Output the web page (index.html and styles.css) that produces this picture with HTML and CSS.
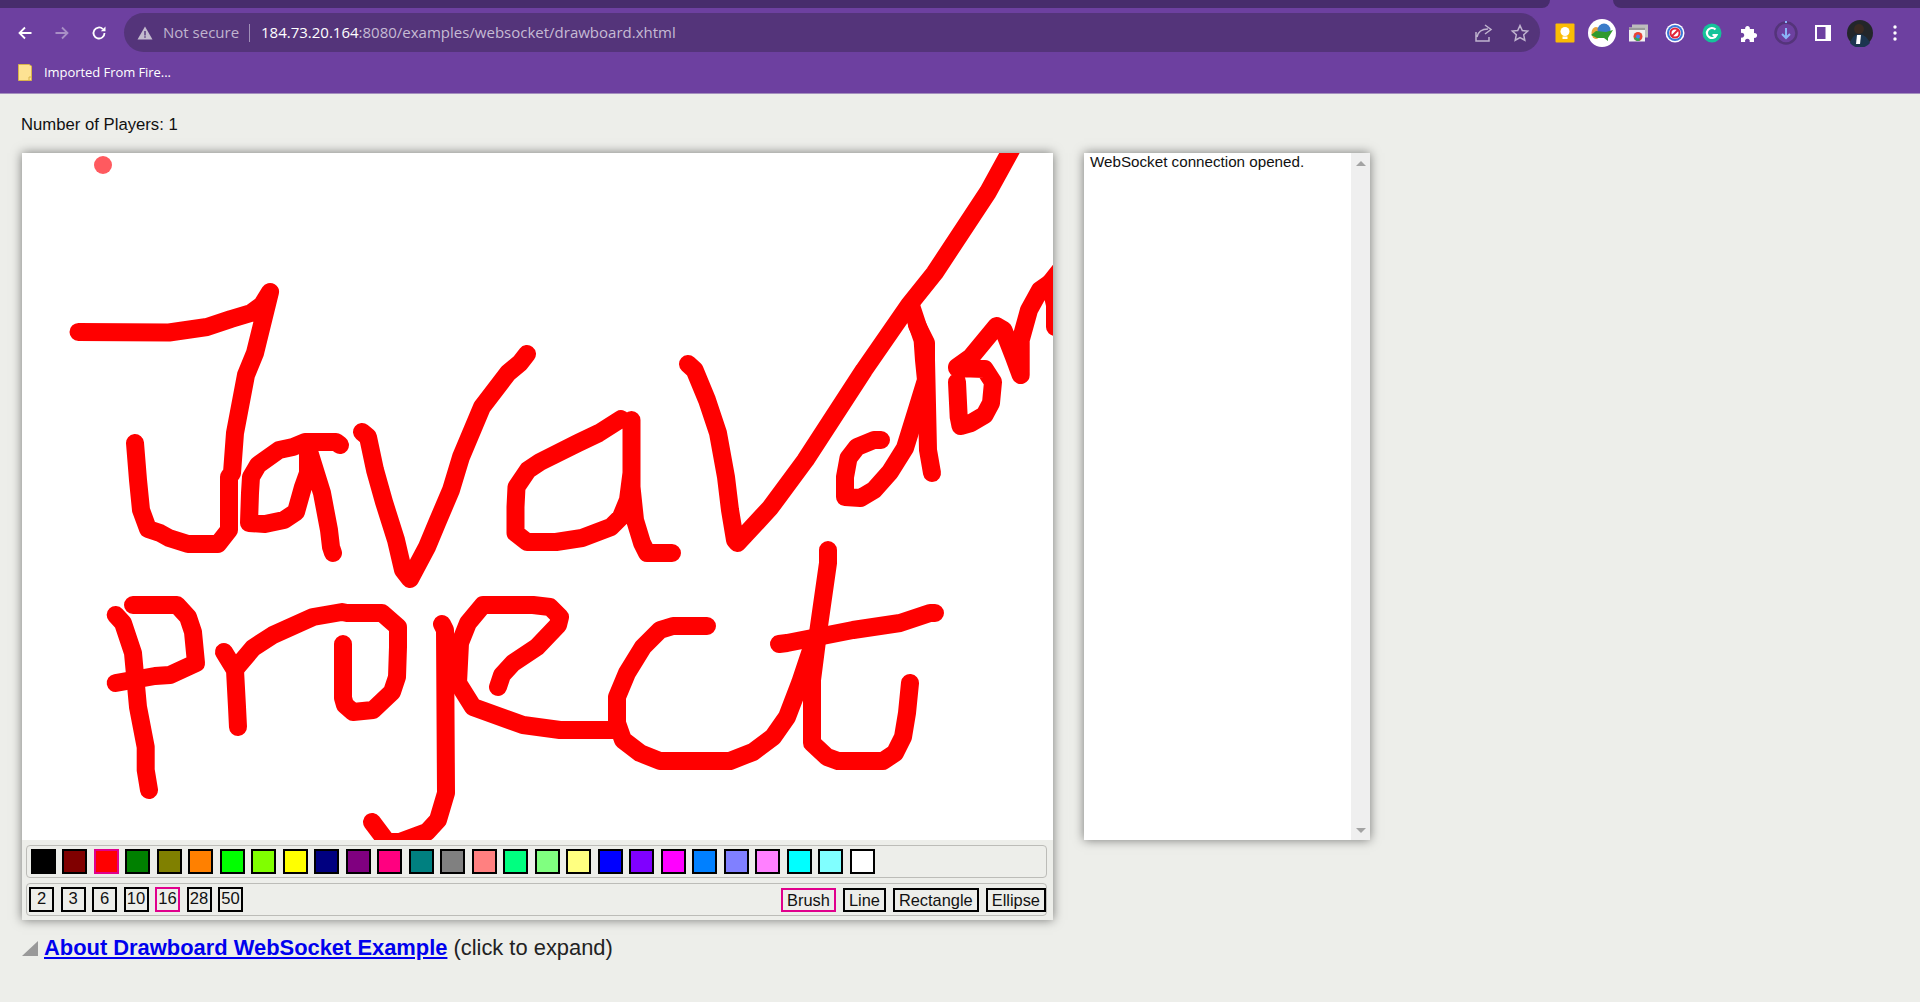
FILE: index.html
```html
<!DOCTYPE html>
<html lang="en">
<head>
<meta charset="utf-8">
<title>Drawboard WebSocket Example</title>
<link rel="stylesheet" href="styles.css">
</head>
<body>
<header class="chrome">
  <div class="tabstrip"><div class="tab-left"></div><div class="tab-gap"></div><div class="tab-right"></div></div>
  <div class="toolbar">
    <div class="nav">
      <svg class="nav-ic" viewBox="0 0 16 16"><path d="M14.5 8H2.5M8 2.5 2.5 8 8 13.500" class="s-white"/></svg>
      <svg class="nav-ic" viewBox="0 0 16 16"><path d="M1.500 8h12M8 2.500 13.500 8 8 13.500" class="s-dim"/></svg>
      <svg class="nav-ic" viewBox="0 0 16 16"><path d="M13.500 8a5.500 5.500 0 1 1-1.600-3.900" class="s-white"/><path d="M14.500 1.500v4.700H9.800z" class="f-white"/></svg>
    </div>
    <div class="omnibox">
      <svg class="warn" viewBox="0 0 16 16"><path d="M8 1.500 15.500 14.500H.5z" class="f-grey"/><path d="M7.300 6h1.400v4.500H7.300zM7.300 11.300h1.400v1.400H7.300z" class="f-box"/></svg>
      <span class="secure">Not secure</span>
      <span class="sep"></span>
      <span class="url"><span class="host">184.73.20.164</span>:8080/examples/websocket/drawboard.xhtml</span>
      <span class="spacer"></span>
      <svg class="omni-ic share" viewBox="0 0 20 20"><path d="M2 9v9h13v-4M3 14c1-5 5-8 11-8M11 2l6 4.500-6 4.500" class="s-grey"/></svg>
      <svg class="omni-ic star" viewBox="0 0 20 20"><path d="M10 2.500l2.300 5 5.400.6-4 3.700 1.100 5.400-4.800-2.700-4.800 2.700 1.100-5.400-4-3.700 5.400-.6z" class="s-grey"/></svg>
    </div>
    <div class="exts">
      <svg class="ext" viewBox="0 0 24 24"><rect x="2.500" y="2.500" width="19" height="19" rx="1" class="f-keep"/><circle cx="12" cy="10.500" r="4.500" class="f-paper"/><rect x="9.500" y="15.500" width="5" height="2.500" class="f-paper"/></svg>
      <svg class="ext-lg" viewBox="0 0 30 30"><circle cx="15" cy="15" r="14" class="f-paper"/><ellipse cx="9" cy="15" rx="4.500" ry="6" class="f-orange"/><circle cx="17" cy="12" r="6.500" class="f-globe"/><path d="M4 17l5-4 10 1 7-2-5 8v3l-4-3-7 0z" class="f-idm"/></svg>
      <svg class="ext" viewBox="0 0 24 24"><rect x="6" y="3.500" width="16" height="13" class="f-grey2"/><rect x="3" y="6.500" width="16" height="14" class="f-paper2"/><rect x="3" y="6.500" width="16" height="2.500" class="f-grey3"/><circle cx="12" cy="15.500" r="4.500" class="f-red"/><path d="M12 15.500 7.800 17a4.500 4.500 0 0 0 6.500 2.300z" class="f-green"/><circle cx="12" cy="15.500" r="2" class="f-blue"/></svg>
      <svg class="ext" viewBox="0 0 24 24"><circle cx="12" cy="12" r="9.500" class="f-paper"/><circle cx="12" cy="12" r="8" class="f-blue2"/><circle cx="12" cy="12" r="6" class="f-paper"/><circle cx="12" cy="12" r="4.500" class="ring-red"/><path d="M9 15l6-6" class="ring-red"/></svg>
      <svg class="ext" viewBox="0 0 24 24"><circle cx="12" cy="12" r="9.500" class="f-gram"/><path d="M15.500 8.500a5 5 0 1 0 1 5.500h-4" class="s-gram"/></svg>
      <svg class="ext" viewBox="0 0 24 24"><path d="M4 8h4.200a2.400 2.400 0 1 1 4.600 0H17v4.200a2.400 2.400 0 1 1 0 4.600V21h-4.400a2.400 2.400 0 1 0-4.400 0H4v-4.500a2.400 2.400 0 1 0 0-4.500z" class="f-white"/></svg>
      <svg class="ext" viewBox="0 0 24 24"><circle cx="12" cy="12" r="10.500" class="s-ring"/><path d="M12 7v10M8 13l4 4 4-4" class="s-dl"/><path d="M12 0v2" class="s-dl"/></svg>
      <svg class="ext" viewBox="0 0 24 24"><rect x="4" y="4" width="16" height="16" class="f-white"/><rect x="6" y="6" width="8.500" height="12" class="f-purple"/></svg>
      <svg class="ext-av" viewBox="0 0 28 28"><circle cx="14" cy="14" r="13" class="f-av"/><circle cx="13" cy="10" r="5" class="f-skin"/><path d="M4 24c2-7 6-9 9-9s8 2 11 9a13 13 0 0 1-20 0z" class="f-coat"/><path d="M11 16h4l-1 9h-4z" class="f-paper"/></svg>
      <svg class="ext-kebab" viewBox="0 0 8 16"><circle cx="4" cy="2" r="1.700" class="f-white"/><circle cx="4" cy="8" r="1.700" class="f-white"/><circle cx="4" cy="14" r="1.700" class="f-white"/></svg>
    </div>
  </div>
  <div class="bookmarks">
    <svg class="folder" viewBox="0 0 14 17"><path d="M.5.500h10.500l2.500 1.500v14.500H.5z" class="f-folder"/><path d="M11 16v-3h2.500" class="s-folder"/></svg>
    <span class="bm-text">Imported From Fire...</span>
  </div>
</header>

<main class="page">
  <div class="players">Number of Players: 1</div>
  <div class="workspace">
    <section class="board">
      <svg class="canvas" viewBox="22 153 1031 687">
        <circle cx="103" cy="165" r="9" class="cursor"/>
        <g class="ink">
          <polyline points="78.500,332 169,332.500 207,327 231,319 251,313 262,305 270,292 255,353 246,375 235,433 232,473 229,477 229,530 218,544 188,544 169,538 160,533 148,529 141,510 138,480 135,443"/>
          <polyline points="340,445 336,442 305,442 293,447 279,450 258,465 251,477 250,493 249,523 265,524 284,520 296,512 303,487 308,473 308,448 322,493 329,530 331,547 333,553"/>
          <polyline points="362,432 368,437 375,470 384,502 396,540 403,570 410,579 427,547 437,523 451,490 461,457 482,407 508,373 520,363 527,354"/>
          <polyline points="621,419 599,433 578,443 540,462 528,470 516.500,487 515.500,507 515.500,533 527,542 556,542 582,538 611,527 621,517 628,500 631.500,473 631.500,420 631.500,487 635,520 642,543 647,553 672,553"/>
          <polyline points="688,364 694.600,370 707,400 718,433 726,477 730,510 735,540 737.600,543 770,508 805.500,460 864,370 909,305 934.600,273 988,192 1010,152 1020,133"/>
          <polyline points="881,440 874,440 857,447 848.500,458 845,477 845,497 860.600,498 874,490 890,472 905,448 917.400,408 926,380 924,360 922.600,340 917.400,325 910.500,304"/>
          <polyline points="917,325 926,343 926,360 928,450 932,473"/>
          <polyline points="957,382 958.700,417 960.500,426 971,423 984.600,415 991,403 993,382 984.600,369 957,368 957,367 971,357 996.600,326 1003.500,330 1014,357 1020.700,375 1020.700,340 1029,310 1040,290 1050,283 1055,305 1055,327"/>
          <polyline points="1050,283 1062,268"/>
          <polyline points="115.700,615 123,623 133,653 138,707 145.700,747 145.700,770 149,790"/>
          <polyline points="133,605 137,605 177,605 188,617 193,632 196,663 170,675 155,676 115.700,683"/>
          <polyline points="224,652 235,670 237,707 238,727"/>
          <polyline points="237,667 253,648 273,635 313,617 342,612 347,613 382,613 398,627 398,647 397,677 392,692 373,710 353,712 345,705 343,698 343,644"/>
          <polyline points="442,624 445,630 446,793 438,820 427,832 400,842 387,842 372,822"/>
          <polyline points="498,687 502,675 513,663 537,647 558,625 560,617 550,607 533,605 483,605 468,623 460,643 458,683 473,707 523,725 560,730 618,730"/>
          <polyline points="707,626 673,626 660,630 643,647 627,673 617,697 617,723 623,740 640,753 660,761 730,761 753,752 773,737 787,717 800,683 812,647"/>
          <polyline points="828,550 828,563 818,633 812,680 812,743 827,757 838,761 883,761 895,753 903,737 907,713 910,683"/>
          <polyline points="779,644 787,643 853,630 900,623 930,613 935,613"/>
        </g>
      </svg>
      <div class="tool-group colors">
        <span class="sw c0"></span><span class="sw c1"></span><span class="sw c2 on"></span><span class="sw c3"></span><span class="sw c4"></span><span class="sw c5"></span><span class="sw c6"></span><span class="sw c7"></span><span class="sw c8"></span><span class="sw c9"></span><span class="sw c10"></span><span class="sw c11"></span><span class="sw c12"></span><span class="sw c13"></span><span class="sw c14"></span><span class="sw c15"></span><span class="sw c16"></span><span class="sw c17"></span><span class="sw c18"></span><span class="sw c19"></span><span class="sw c20"></span><span class="sw c21"></span><span class="sw c22"></span><span class="sw c23"></span><span class="sw c24"></span><span class="sw c25"></span><span class="sw c26"></span>
      </div>
      <div class="tool-group tools">
        <div class="sizes">
          <span class="size">2</span><span class="size">3</span><span class="size">6</span><span class="size">10</span><span class="size on">16</span><span class="size">28</span><span class="size">50</span>
        </div>
        <div class="shapes">
          <span class="shape on">Brush</span><span class="shape">Line</span><span class="shape">Rectangle</span><span class="shape">Ellipse</span>
        </div>
      </div>
    </section>
    <aside class="log">
      <div class="log-text">WebSocket connection opened.</div>
      <div class="scrollbar"><span class="arrow-up"></span><span class="arrow-down"></span></div>
    </aside>
  </div>
  <div class="about">
    <span class="expander"></span>
    <a class="about-link" href="#">About Drawboard WebSocket Example</a>
    <span class="about-note">(click to expand)</span>
  </div>
</main>
</body>
</html>
```
FILE: styles.css
```css
* { box-sizing: border-box; }
html, body { margin: 0; padding: 0; }
body { background: #edeeea; color: #111; font-family: "Liberation Sans", Arial, sans-serif; height: 1002px; overflow: hidden; }

.chrome { height: 94px; background: #6d40a0; border-bottom: 1px solid #a48fbe; }
.tabstrip { display: flex; height: 8px; }
.tab-left { width: 1550px; background: #472c6c; border-bottom-right-radius: 8px; }
.tab-gap { width: 63px; }
.tab-right { flex: 1; background: #472c6c; border-bottom-left-radius: 8px; }

.toolbar { display: flex; align-items: center; height: 49px; padding-top: 5px; padding-bottom: 5px; }
.nav { display: flex; width: 124px; padding-left: 17px; gap: 21px; }
.nav-ic { width: 16px; height: 16px; }
.omnibox { display: flex; align-items: center; width: 1416px; height: 39px; background: #54347a; border-radius: 20px; padding-left: 13px; padding-right: 10px; }
.warn { width: 16px; height: 16px; }
.secure { margin-left: 10px; margin-top: -2px; color: #c0b4cf; font: 15px "Open Sans", sans-serif; width: 77px; white-space: nowrap; }
.sep { width: 1px; height: 18px; background: #a08fb8; margin-left: 9px; margin-right: 11px; }
.url { margin-top: -2px; color: #c6bbd4; font: 15px "Open Sans", sans-serif; white-space: nowrap; }
.host { color: #fff; }
.spacer { flex: 1; }
.omni-ic { width: 20px; height: 20px; }
.star { margin-left: 16px; }

.exts { display: flex; align-items: center; padding-left: 13px; }
.ext { width: 24px; height: 24px; margin-right: 13px; flex: none; }
.ext-lg { width: 30px; height: 30px; margin-left: -3px; margin-right: 9px; flex: none; }
.ext-av { width: 28px; height: 28px; margin-left: -2px; margin-right: 17px; flex: none; }
.ext-kebab { width: 8px; height: 16px; flex: none; }

.bookmarks { display: flex; align-items: center; height: 30px; padding-left: 18px; margin-top: 0; }
.folder { width: 14px; height: 17px; }
.bm-text { margin-left: 12px; color: #fff; font: 13px "Open Sans", sans-serif; letter-spacing: -.06px; }

.s-white, .s-dim, .s-grey, .s-gram, .s-dl, .s-ring, .s-folder { fill: none; }
.s-white { stroke: #fff; stroke-width: 1.8; }
.s-dim { stroke: #a98fc6; stroke-width: 1.8; }
.s-grey { stroke: #c0b4cf; stroke-width: 1.500; }
.s-gram { stroke: #fff; stroke-width: 2.200; }
.s-dl { stroke: #8ab4f8; stroke-width: 2; }
.s-ring { stroke: #54347a; stroke-width: 2.500; }
.s-folder { stroke: #d9b44a; }
.f-white { fill: #fff; }
.f-grey { fill: #c4bccf; }
.f-box { fill: #54347a; }
.f-keep { fill: #fbbc04; }
.f-paper { fill: #fff; }
.f-paper2 { fill: #f1f1f1; }
.f-grey2 { fill: #bdbdbd; }
.f-grey3 { fill: #9a9a9a; }
.f-orange { fill: #e8a33c; }
.f-globe { fill: #3b7cc9; }
.f-idm { fill: #2f9a2f; }
.f-red { fill: #ea4335; }
.f-green { fill: #34a853; }
.f-blue { fill: #4285f4; }
.f-blue2 { fill: #3a78d8; }
.ring-red { fill: none; stroke: #e0243a; stroke-width: 2; }
.f-gram { fill: #15c39a; }
.f-purple { fill: #6d40a0; }
.f-av { fill: #23262a; }
.f-skin { fill: #3a2a22; }
.f-coat { fill: #1c3550; }
.f-folder { fill: #fde293; stroke: #d9b44a; }

.page { padding: 21px 0 0 21px; }
.players { font-size: 16.7px; line-height: 19px; height: 19px; }
.workspace { display: flex; align-items: flex-start; margin-top: 19px; margin-left: 1px; gap: 31px; }

.board { width: 1031px; height: 767px; box-shadow: 0 0 10px rgba(0, 0, 0, .5); background: #edeeea; }
.canvas { display: block; width: 1031px; height: 687px; background: #fff; }
.cursor { fill: #ff5a5f; }
.ink polyline { fill: none; stroke: #f00; stroke-width: 18; stroke-linecap: round; stroke-linejoin: round; }

.tool-group { border: 1px solid #bcbcb8; border-radius: 4px; margin-left: 4px; margin-right: 6px; display: flex; }
.colors { height: 33px; margin-top: 5px; padding: 3px 0 0 3.500px; gap: 6.500px; }
.tools { height: 33px; margin-top: 5px; padding: 3px 0 0 2px; justify-content: space-between; }
.sw { width: 25px; height: 25px; border: 2.500px solid #000; flex: none; }
.sw.on { border-color: #e0008c; }
.c0 { background: #000; } .c1 { background: #800000; } .c2 { background: #f00; } .c3 { background: #008000; }
.c4 { background: #808000; } .c5 { background: #ff8000; } .c6 { background: #0f0; } .c7 { background: #80ff00; }
.c8 { background: #ff0; } .c9 { background: #000080; } .c10 { background: #800080; } .c11 { background: #ff0080; }
.c12 { background: #008080; } .c13 { background: #808080; } .c14 { background: #ff8080; } .c15 { background: #00ff80; }
.c16 { background: #80ff80; } .c17 { background: #ffff80; } .c18 { background: #00f; } .c19 { background: #8000ff; }
.c20 { background: #f0f; } .c21 { background: #0080ff; } .c22 { background: #8080ff; } .c23 { background: #ff80ff; }
.c24 { background: #0ff; } .c25 { background: #80ffff; } .c26 { background: #fff; }

.sizes { display: flex; gap: 6.500px; }
.size { width: 25px; height: 25px; border: 2px solid #000; text-align: center; font-size: 16.6px; line-height: 20px; color: #111; }
.shapes { display: flex; gap: 7px; padding-top: 1px; }
.shape { height: 24px; border: 2px solid #000; padding: 0 4px; font-size: 16.4px; line-height: 20px; color: #111; }
.on.size, .on.shape { border-color: #e0008c; }

.log { position: relative; width: 286px; height: 687px; background: #fff; box-shadow: 0 0 10px rgba(0, 0, 0, .5); display: flex; }
.log-text { flex: 1; font-size: 15.2px; line-height: 18px; padding-left: 6px; color: #111; white-space: nowrap; }
.scrollbar { width: 19px; background: #efefef; display: flex; flex-direction: column; justify-content: space-between; align-items: center; padding: 8px 0 7px; }
.arrow-up { width: 0; height: 0; border: 5px solid transparent; border-top: 0; border-bottom-color: #a3a3a3; }
.arrow-down { width: 0; height: 0; border: 5px solid transparent; border-bottom: 0; border-top-color: #a3a3a3; }

.about { display: flex; align-items: center; margin-top: 15px; margin-left: 1px; height: 26px; font-size: 21.9px; color: #222; }
.expander { width: 0; height: 0; border-style: solid; border-width: 0 0 15px 16px; border-color: transparent transparent #999 transparent; margin-right: 6px; }
.about-link { color: #0000ee; font-weight: bold; text-decoration: underline; }
.about-note { margin-left: 6px; }
```
